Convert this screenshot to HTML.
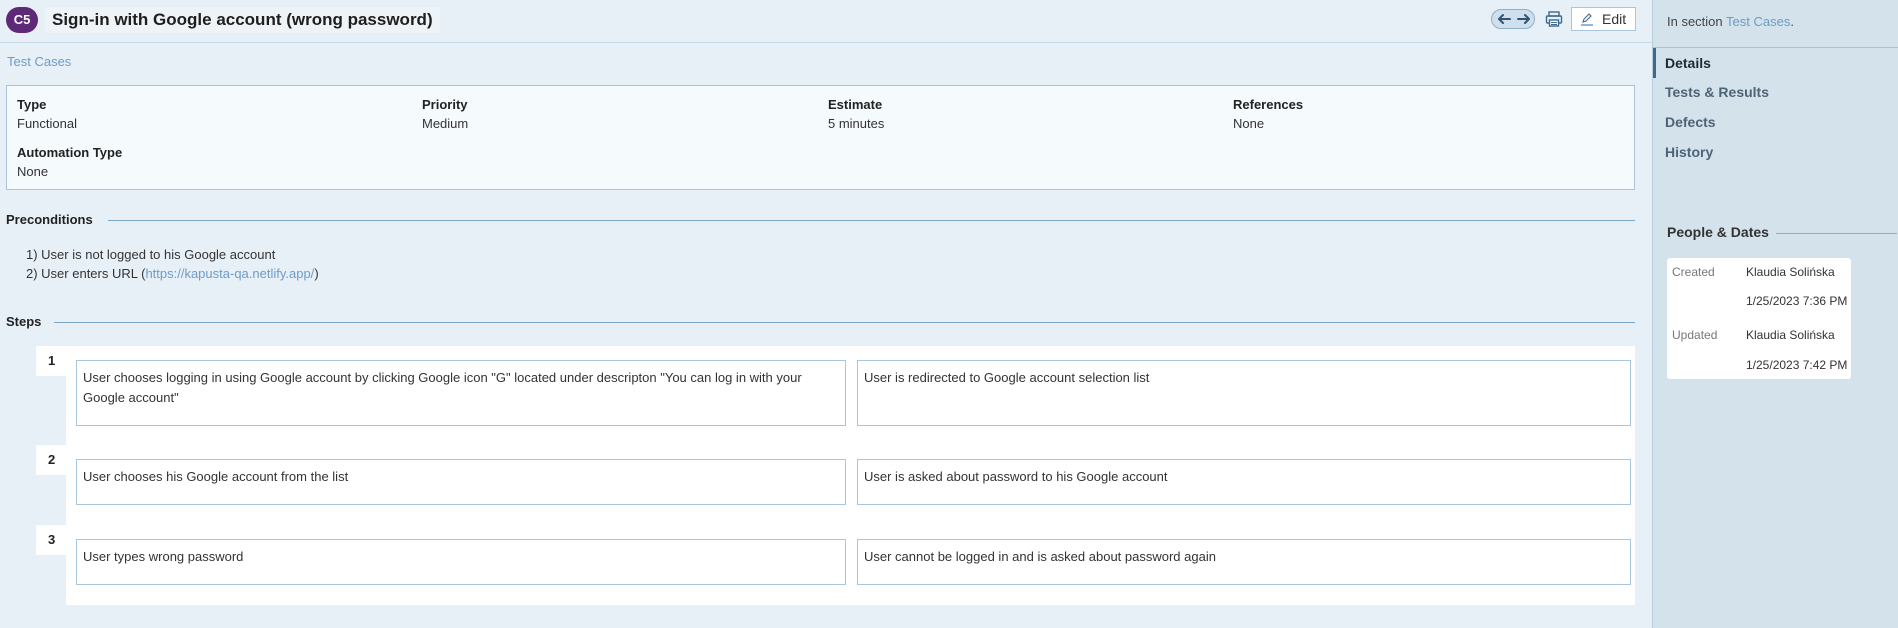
<!DOCTYPE html>
<html><head><meta charset="utf-8"><style>
*{box-sizing:border-box;margin:0;padding:0}
body{width:1898px;height:628px;overflow:hidden;background:#e8f0f7;font-family:"Liberation Sans",sans-serif;font-size:13px;color:#333;position:relative}
.a{position:absolute;white-space:nowrap}
.lbl{font-weight:bold;color:#222;font-size:13px}
.lnk{color:#6d9cc6}
.box{position:absolute;background:#fff;border:1px solid #a9c6dc;padding:7px 6px;line-height:20px;white-space:normal}
.side{position:absolute;left:1652px;top:0;width:246px;height:628px;background:#d4e2ec;border-left:1px solid #b9cedd}
.tab{position:absolute;left:12px;font-weight:bold;font-size:14px;color:#4d6477}
.pd{font-size:12px}
</style></head><body>
<div class="a" style="left:6px;top:7px;width:32px;height:26px;border-radius:13px;background:#5e2a78;color:#fff;font-weight:bold;font-size:13px;text-align:center;line-height:26px">C5</div>
<div class="a" style="left:45px;top:7px;width:395px;height:26px;background:#eef3f8"></div>
<div class="a" style="left:52px;top:10px;font-size:17px;font-weight:bold;color:#1e1e1e">Sign-in with Google account (wrong password)</div>
<div class="a" style="left:0;top:42px;width:1652px;height:1px;background:#c4d7e6"></div>
<div class="a" style="left:1491px;top:9px;width:44px;height:20px;border-radius:10px;background:#cfdfeb;border:1px solid #8eb0cb"></div>
<svg class="a" style="left:1496px;top:12px" width="36" height="14" viewBox="0 0 36 14"><path d="M3 7h11M3 7l4-4M3 7l4 4M22 7h11M33 7l-4-4M33 7l-4 4" stroke="#2f5573" stroke-width="2" fill="none" stroke-linecap="round"/></svg>
<svg class="a" style="left:1545px;top:10px" width="18" height="18" viewBox="0 0 18 18"><rect x="4" y="2" width="10" height="4" fill="none" stroke="#3e6a8e" stroke-width="1.4"/><rect x="1.5" y="6" width="15" height="7" rx="1" fill="none" stroke="#3e6a8e" stroke-width="1.4"/><rect x="4.5" y="10" width="9" height="6" fill="#fff" stroke="#3e6a8e" stroke-width="1.4"/><path d="M6 12.5h6M6 14.5h6" stroke="#3e6a8e"/></svg>
<div class="a" style="left:1571px;top:7px;width:65px;height:24px;background:#fff;border:1px solid #a9c6dc"></div>
<svg class="a" style="left:1580px;top:12px" width="14" height="14" viewBox="0 0 14 14"><path d="M3 10l1-3 5-5 2 2-5 5z" fill="none" stroke="#3e6a8e" stroke-width="1.1"/><path d="M1 13h12" stroke="#6d9cc6" stroke-width="1.5"/></svg>
<div class="a" style="left:1602px;top:11px;font-size:14px;color:#333">Edit</div>
<div class="a lnk" style="left:7px;top:54px;font-size:13px">Test Cases</div>
<div class="a" style="left:6px;top:85px;width:1629px;height:105px;background:#f5fafd;border:1px solid #a9c4d8"></div>
<div class="a lbl" style="left:17px;top:97px">Type</div><div class="a" style="left:17px;top:116px">Functional</div>
<div class="a lbl" style="left:422px;top:97px">Priority</div><div class="a" style="left:422px;top:116px">Medium</div>
<div class="a lbl" style="left:828px;top:97px">Estimate</div><div class="a" style="left:828px;top:116px">5 minutes</div>
<div class="a lbl" style="left:1233px;top:97px">References</div><div class="a" style="left:1233px;top:116px">None</div>
<div class="a lbl" style="left:17px;top:145px">Automation Type</div><div class="a" style="left:17px;top:164px">None</div>
<div class="a lbl" style="left:6px;top:212px">Preconditions</div>
<div class="a" style="left:108px;top:220px;width:1527px;height:1px;background:#7ea6c6"></div>
<div class="a" style="left:26px;top:247px">1) User is not logged to his Google account</div>
<div class="a" style="left:26px;top:266px">2) User enters URL (<span class="lnk">https://kapusta-qa.netlify.app/</span>)</div>
<div class="a lbl" style="left:6px;top:314px">Steps</div>
<div class="a" style="left:54px;top:322px;width:1581px;height:1px;background:#7ea6c6"></div>
<div class="a" style="left:66px;top:346px;width:1569px;height:259px;background:#fff"></div>
<div class="a lbl" style="left:36px;top:346px;width:30px;height:30px;background:#fff;padding:7px 0 0 12px">1</div>
<div class="a lbl" style="left:36px;top:445px;width:30px;height:30px;background:#fff;padding:7px 0 0 12px">2</div>
<div class="a lbl" style="left:36px;top:525px;width:30px;height:30px;background:#fff;padding:7px 0 0 12px">3</div>
<div class="box" style="left:76px;top:360px;width:770px;height:66px">User chooses logging in using Google account by clicking Google icon "G" located under descripton "You can log in with your Google account"</div>
<div class="box" style="left:857px;top:360px;width:774px;height:66px">User is redirected to Google account selection list</div>
<div class="box" style="left:76px;top:459px;width:770px;height:46px">User chooses his Google account from the list</div>
<div class="box" style="left:857px;top:459px;width:774px;height:46px">User is asked about password to his Google account</div>
<div class="box" style="left:76px;top:539px;width:770px;height:46px">User types wrong password</div>
<div class="box" style="left:857px;top:539px;width:774px;height:46px">User cannot be logged in and is asked about password again</div>
<div class="side">
<div class="a" style="left:14px;top:14px;font-size:13px;color:#444">In section <span class="lnk">Test Cases</span>.</div>
<div class="a" style="left:0;top:47px;width:246px;height:1px;background:#a9c2d6"></div>
<div class="a" style="left:0;top:48px;width:3px;height:30px;background:#3e6a8e"></div>
<div class="tab" style="top:55px;color:#1e2a35">Details</div>
<div class="tab" style="top:84px">Tests &amp; Results</div>
<div class="tab" style="top:114px">Defects</div>
<div class="tab" style="top:144px">History</div>
<div class="a" style="left:14px;top:224px;font-weight:bold;font-size:14px;color:#333">People &amp; Dates</div>
<div class="a" style="left:123px;top:233px;width:121px;height:1px;background:#8fb0ca"></div>
<div class="a" style="left:14px;top:258px;width:184px;height:121px;background:#fff;border-radius:3px"></div>
<div class="a pd" style="left:19px;top:265px;color:#777">Created</div>
<div class="a pd" style="left:93px;top:265px">Klaudia Solińska</div>
<div class="a pd" style="left:93px;top:294px">1/25/2023 7:36 PM</div>
<div class="a pd" style="left:19px;top:328px;color:#777">Updated</div>
<div class="a pd" style="left:93px;top:328px">Klaudia Solińska</div>
<div class="a pd" style="left:93px;top:358px">1/25/2023 7:42 PM</div>
</div>
</body></html>
